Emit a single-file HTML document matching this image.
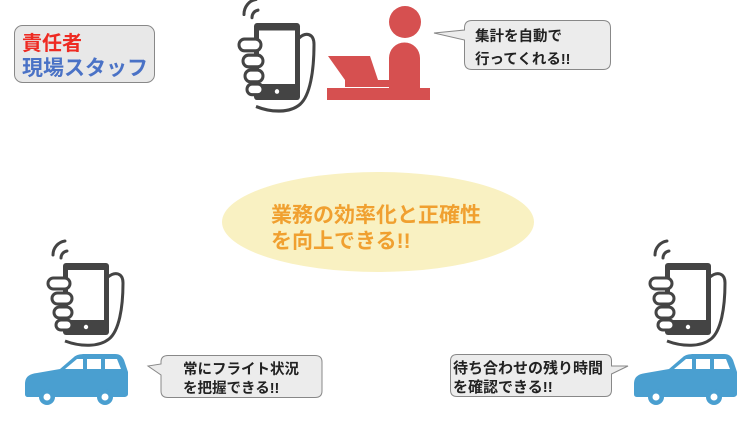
<!DOCTYPE html>
<html><head><meta charset="utf-8"><style>
html,body{margin:0;padding:0;background:#fff;width:756px;height:422px;overflow:hidden}
svg{display:block}
text{font-family:"Liberation Sans","Noto Sans CJK JP",sans-serif;font-weight:bold}
</style></head><body>
<svg width="756" height="422" viewBox="0 0 756 422" xmlns="http://www.w3.org/2000/svg">
<defs>
<g id="ph">
  <path d="M-10,-8 A14,14 0 0 1 2,-22" fill="none" stroke="#444" stroke-width="3" stroke-linecap="round"/>
  <path d="M-2,-5 A7,7 0 0 1 4,-12" fill="none" stroke="#444" stroke-width="3" stroke-linecap="round"/>
  <path d="M45,14 C52,8 60,10 60,20 C60,45 56,68 46,76 C36,84 18,84 2,78" fill="none" stroke="#444" stroke-width="3"/>
  <rect x="0" y="0" width="46" height="72" rx="3" fill="#444"/>
  <rect x="5" y="7" width="36" height="50" fill="#fff"/>
  <circle cx="23" cy="64" r="2.2" fill="#fff"/>
  <g fill="#fff" stroke="#444" stroke-width="3">
    <rect x="-15" y="15" width="22" height="11" rx="5.5"/>
    <rect x="-11" y="30" width="20" height="11" rx="5.5"/>
    <rect x="-9" y="44" width="18" height="11" rx="5.5"/>
    <rect x="-7" y="57" width="16" height="10" rx="5"/>
  </g>
</g>
<g id="car" fill="#4a9fd0">
  <path d="M0,32 C0,25 4,22 12,21 L35,17 L49,5 C51,3 55,2 60,2 L90,2 C95,2 97,4 99,8 L103,20 L103,42 C103,44 101,45 99,45 L3,45 C1,45 0,44 0,42 Z"/>
  <path d="M40,17 L52,7 L58,7 L58,17 Z M62,7 L76,7 L76,17 L62,17 Z M80,7 L92,7 L96,17 L80,17 Z" fill="#fff"/>
  <circle cx="22" cy="45" r="8"/><circle cx="80" cy="45" r="8"/>
  <circle cx="22" cy="45" r="3.5" fill="#fff"/><circle cx="80" cy="45" r="3.5" fill="#fff"/>
</g>
</defs>

<rect x="14.5" y="25.5" width="140" height="57" rx="8" fill="#e8e8e8" stroke="#888"/>
<text x="22" y="50" font-size="20" fill="#ee2a22">責任者</text>
<text x="22" y="75" font-size="21" fill="#4a72c6">現場スタッフ</text>

<use href="#ph" transform="translate(254,23) scale(1,1.07)"/>
<g fill="#d65050">
  <circle cx="405" cy="22" r="16"/>
  <path d="M389,58 A15.5,15.5 0 0 1 420,58 L420,88 L389,88 Z"/>
  <path d="M328,56 L370,56 L378,80 L345,80 Z"/>
  <rect x="345" y="80" width="53" height="7"/>
  <rect x="327" y="88" width="103" height="12"/>
</g>

<path d="M472,20.5 L603,20.5 Q610.5,20.5 610.5,28 L610.5,62 Q610.5,69.5 603,69.5 L472,69.5 Q464.5,69.5 464.5,62 L464.5,40 L434,33 L464.5,30 L464.5,28 Q464.5,20.5 472,20.5 Z" fill="#ececec" stroke="#888"/>
<text x="475" y="41" font-size="14.5" fill="#222">集計を自動で</text>
<text x="475" y="64" font-size="14.5" fill="#222">行ってくれる!!</text>

<ellipse cx="378" cy="222" rx="156" ry="50" fill="#f9f1c2"/>
<text x="271" y="222" font-size="21" fill="#f0a030">業務の効率化と正確性</text>
<text x="271" y="248" font-size="21" fill="#f0a030">を向上できる!!</text>

<use href="#ph" transform="translate(63,263)"/>
<use href="#car" transform="translate(25,352)"/>
<path d="M168,355.5 L315,355.5 Q322,355.5 322,362 L322,391 Q322,397.5 315,397.5 L168,397.5 Q161,397.5 161,391 L161,375 L148,366 L161,364 L161,362 Q161,355.5 168,355.5 Z" fill="#ececec" stroke="#888"/>
<text x="183" y="374" font-size="14.5" fill="#222">常にフライト状況</text>
<text x="183" y="393" font-size="14.5" fill="#222">を把握できる!!</text>

<use href="#ph" transform="translate(665,263)"/>
<use href="#car" transform="translate(634,352)"/>
<path d="M457,354.5 L605,354.5 Q611.5,354.5 611.5,361 L611.5,366 L628,366 L611.5,374 L611.5,390 Q611.5,396.5 605,396.5 L457,396.5 Q450.5,396.5 450.5,390 L450.5,361 Q450.5,354.5 457,354.5 Z" fill="#ececec" stroke="#888"/>
<text x="453" y="373" font-size="15" fill="#222">待ち合わせの残り時間</text>
<text x="453" y="392" font-size="15" fill="#222">を確認できる!!</text>
</svg>
</body></html>
